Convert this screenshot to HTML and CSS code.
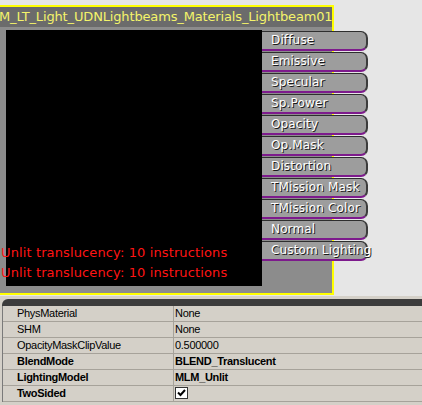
FILE: index.html
```html
<!DOCTYPE html>
<html>
<head>
<meta charset="utf-8">
<link rel="stylesheet" href="styles.css">
</head>
<body>
<div class="top">
  <div class="node">
    <div class="title">M_LT_Light_UDNLightbeams_Materials_Lightbeam01</div>
    <div class="body">
      <div class="preview"></div>
      <div class="inputs">
        <div class="pin">Diffuse</div>
        <div class="pin">Emissive</div>
        <div class="pin">Specular</div>
        <div class="pin">Sp.Power</div>
        <div class="pin">Opacity</div>
        <div class="pin">Op.Mask</div>
        <div class="pin">Distortion</div>
        <div class="pin">TMission Mask</div>
        <div class="pin">TMission Color</div>
        <div class="pin">Normal</div>
        <div class="pin">Custom Lighting</div>
      </div>
    </div>
    <div class="stats">
      <div>Unlit translucency: 10 instructions</div>
      <div>Unlit translucency: 10 instructions</div>
    </div>
  </div>
</div>
<div class="props">
  <div class="header"></div>
  <div class="grid">
    <div class="name">PhysMaterial</div><div class="val">None</div>
    <div class="name">SHM</div><div class="val">None</div>
    <div class="name">OpacityMaskClipValue</div><div class="val">0.500000</div>
    <div class="name bold">BlendMode</div><div class="val bold">BLEND_Translucent</div>
    <div class="name bold">LightingModel</div><div class="val bold">MLM_Unlit</div>
    <div class="name bold">TwoSided</div><div class="val"><span class="check"><svg width="9" height="8" viewBox="0 0 9 8"><path d="M1 3.5 L3.5 6 L8 1" fill="none" stroke="#000" stroke-width="2"/></svg></span></div>
  </div>
</div>
</body>
</html>
```

FILE: styles.css
```css
html, body {
  margin: 0;
  padding: 0;
}
body {
  background: #e6e6e6;
  width: 422px;
  height: 405px;
  overflow: hidden;
  font-family: "DejaVu Sans", sans-serif;
}
.top {
  height: 296px;
  padding-top: 5px;
  box-sizing: border-box;
}
.node {
  position: relative;
  width: 332px;
  border-top: 2px solid #ffff00;
  border-right: 2px solid #ffff00;
  border-bottom: 2px solid #ffff00;
  background: #8c8c8c;
}
.title {
  height: 20px;
  line-height: 20px;
  background: #6b6b6b;
  color: #f4f46a;
  font-size: 13px;
  letter-spacing: -0.15px;
  margin-left: -1px;
  white-space: nowrap;
  overflow: visible;
}
.body {
  height: 266px;
  display: flex;
  align-items: flex-start;
}
.preview {
  width: 256px;
  height: 256px;
  margin: 3px 0 0 6px;
  background: #000;
  flex: none;
}
.inputs {
  margin-top: 4px;
  display: flex;
  flex-direction: column;
  gap: 1px;
  flex: none;
}
.pin {
  width: 95px;
  height: 17px;
  line-height: 17px;
  background: #9d9d9d;
  border-top: 1px solid #2e2e2e;
  border-right: 2px solid #3c3c3c;
  border-bottom: 2px solid #7d1a8c;
  border-radius: 0 7px 7px 0;
  color: #ffffff;
  font-size: 12px;
  letter-spacing: 0.15px;
  padding-left: 9px;
  white-space: nowrap;
  text-shadow: 1px 1px 0 #1a1a1a;
}
.stats {
  position: absolute;
  left: 1px;
  top: 236px;
  color: #ff1414;
  font-size: 13px;
  letter-spacing: 0.12px;
  line-height: 20px;
  white-space: nowrap;
}
.props {
  background: #d4d0c8;
  padding: 3px 0 0 2px;
  height: 109px;
  box-sizing: border-box;
  font-family: "Liberation Sans", Arial, sans-serif;
  font-size: 11px;
  letter-spacing: -0.3px;
  color: #000;
}
.header {
  height: 7px;
  background: #3c3c3c;
  border-top-left-radius: 6px;
}
.grid {
  display: grid;
  grid-template-columns: 171px 1fr;
  border-left: 1px solid #7a7a7a;
}
.grid > div {
  height: 15px;
  line-height: 15px;
  border-bottom: 1px solid #a6a29a;
  white-space: nowrap;
}
.name {
  padding-left: 14px;
  border-right: 1px solid #a6a29a;
}
.val {
  padding-left: 1px;
}
.bold {
  font-weight: bold;
}
.check {
  display: inline-block;
  width: 11px;
  height: 10px;
  margin-top: 1px;
  background: #fff;
  border: 1px solid #333;
  vertical-align: top;
  position: relative;
}
.check svg {
  position: absolute;
  left: 1px;
  top: 1px;
}
```
